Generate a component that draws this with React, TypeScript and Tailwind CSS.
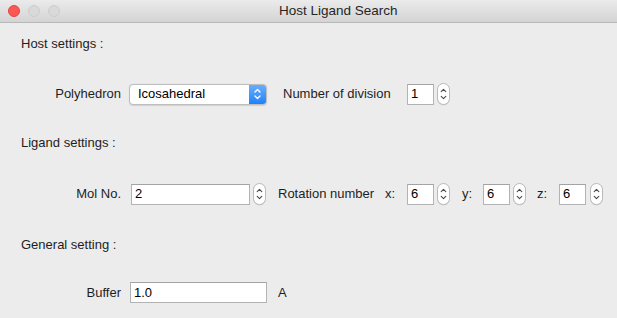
import React from "react";

const font = { fontFamily: '"Liberation Sans", Arial, sans-serif' };

function Stepper() {
  return (
    <div className="w-[13px] h-[22px] rounded-full border border-[#b9b9b9] bg-white flex items-center justify-center shadow-[0_0.5px_0.5px_rgba(0,0,0,0.1)]">
      <svg width="11" height="20" viewBox="0 0 11 20" fill="none" stroke="#4a4a4a" strokeWidth="1.1" strokeLinecap="round" strokeLinejoin="round">
        <path d="M3.2 7.6 L5.5 5.3 L7.8 7.6" />
        <path d="M3.2 12.4 L5.5 14.7 L7.8 12.4" />
      </svg>
    </div>
  );
}

function Input({ value, w }: { value: string; w: string }) {
  return (
    <div className={`${w} h-[21px] bg-white border border-[#b3b3b3] border-t-[#a3a3a3] flex items-center pl-[3px] text-[13px] text-black`}>
      {value}
    </div>
  );
}

function Heading({ children, mt }: { children: React.ReactNode; mt: string }) {
  return (
    <div className={`${mt} h-[20px] flex items-center pl-[21px] text-[13px] text-[#1e1e1e]`}>{children}</div>
  );
}

export default function App() {
  return (
    <div className="w-[617px] h-[318px] bg-[#ececec] overflow-hidden flex flex-col" style={font}>
      {/* title bar */}
      <div className="h-[23px] shrink-0 bg-gradient-to-b from-[#ebebeb] to-[#d4d4d4] border-b border-[#b8b8b8] flex items-center relative">
        <div className="flex gap-[8px] pl-[8px]">
          <div className="w-[12px] h-[12px] rounded-full bg-[#fc5753] border border-[#df4744]" />
          <div className="w-[12px] h-[12px] rounded-full bg-[#d9d9d9] border border-[#cdcdcd]" />
          <div className="w-[12px] h-[12px] rounded-full bg-[#d9d9d9] border border-[#cdcdcd]" />
        </div>
        <div className="absolute left-[279px] top-0 h-[23px] flex items-center text-[13.5px] text-[#262626]">
          Host Ligand Search
        </div>
      </div>

      <Heading mt="mt-[11px]">Host settings :</Heading>

      {/* row 1 */}
      <div className="mt-[29px] h-[22px] flex items-center text-[13px] text-[#1e1e1e]">
        <div className="w-[121px] text-right">Polyhedron</div>
        <div className="ml-[8px] w-[138px] h-[21px] flex rounded-[4px] border border-[#bdbdbd] bg-white shadow-[0_0.5px_1px_rgba(0,0,0,0.12)] overflow-hidden">
          <div className="flex-1 flex items-center pl-[8px] text-black">Icosahedral</div>
          <div className="w-[17px] h-full bg-gradient-to-b from-[#68adfb] to-[#1a82fb] flex items-center justify-center">
            <svg width="9" height="14" viewBox="0 0 9 14" fill="none" stroke="white" strokeWidth="1.4" strokeLinecap="round" strokeLinejoin="round">
              <path d="M2 5 L4.5 2.5 L7 5" />
              <path d="M2 9 L4.5 11.5 L7 9" />
            </svg>
          </div>
        </div>
        <div className="ml-[16px] w-[113px] whitespace-nowrap">Number of division</div>
        <div className="ml-[11px]"><Input value="1" w="w-[27px]" /></div>
        <div className="ml-[3px]"><Stepper /></div>
      </div>

      <Heading mt="mt-[28px]">Ligand settings :</Heading>

      {/* row 2 */}
      <div className="mt-[30px] h-[22px] flex items-center text-[13px] text-[#1e1e1e]">
        <div className="w-[121px] text-right">Mol No.</div>
        <div className="ml-[10px]"><Input value="2" w="w-[119px]" /></div>
        <div className="ml-[3px]"><Stepper /></div>
        <div className="ml-[12px] w-[98px] whitespace-nowrap">Rotation number</div>
        <div className="ml-[9px] w-[10px]">x:</div>
        <div className="ml-[12px]"><Input value="6" w="w-[27px]" /></div>
        <div className="ml-[3px]"><Stepper /></div>
        <div className="ml-[12px] w-[10px]">y:</div>
        <div className="ml-[11px]"><Input value="6" w="w-[27px]" /></div>
        <div className="ml-[3px]"><Stepper /></div>
        <div className="ml-[11px] w-[12px]">z:</div>
        <div className="ml-[10px]"><Input value="6" w="w-[27px]" /></div>
        <div className="ml-[4px]"><Stepper /></div>
      </div>

      <Heading mt="mt-[30px]">General setting :</Heading>

      {/* row 3 */}
      <div className="mt-[27px] h-[21px] flex items-center text-[13px] text-[#1e1e1e]">
        <div className="w-[121px] text-right">Buffer</div>
        <div className="ml-[9px]"><Input value="1.0" w="w-[137px]" /></div>
        <div className="ml-[11px]">A</div>
      </div>
    </div>
  );
}
